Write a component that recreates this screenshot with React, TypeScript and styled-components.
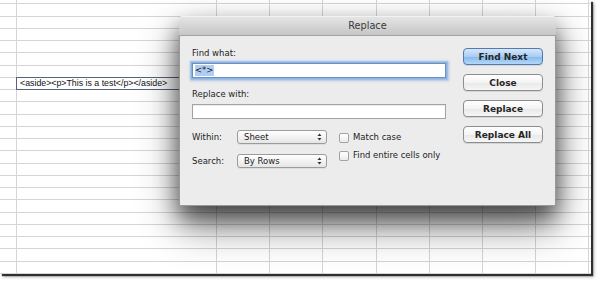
import React from 'react';
import styled, { createGlobalStyle } from 'styled-components';

const GlobalStyle = createGlobalStyle`
  html, body {
    margin: 0;
    padding: 0;
    background: #ffffff;
  }
  body {
    width: 600px;
    height: 282px;
    overflow: hidden;
  }
`;

const UI_FONT = `"DejaVu Sans", "Noto Sans", sans-serif`;
const COLS = 10;
const ROWS = 24;

const Screen = styled.div`
  position: relative;
  width: 591px;
  height: 274px;
  background: #ffffff;
  overflow: hidden;
  box-shadow: 2px 2px 1px rgba(0, 0, 0, 0.75), 3px 3px 3px rgba(0, 0, 0, 0.3);
`;

const Sheet = styled.div`
  display: grid;
  grid-template-columns: 17px 200px repeat(7, 53.2px) 1fr;
  grid-template-rows: 4.3px repeat(22, 12.25px) 1fr;
  width: 100%;
  height: 100%;
`;

const Cell = styled.div<{ $last?: boolean }>`
  position: relative;
  box-sizing: border-box;
  border-bottom: 1px solid #d5d5d5;
  border-right: ${(p) => (p.$last ? 'none' : '1px solid #d5d5d5')};
`;

const CellEditor = styled.div`
  position: absolute;
  left: -1px;
  top: -1px;
  z-index: 1;
  box-sizing: border-box;
  width: 180px;
  height: 13px;
  padding-left: 3px;
  border: 1px solid #56627e;
  background: #ffffff;
  font-family: "Liberation Sans", Arial, sans-serif;
  font-size: 8.8px;
  line-height: 11px;
  color: #111;
  white-space: nowrap;
`;

const Dialog = styled.div`
  position: absolute;
  left: 179px;
  top: 16px;
  z-index: 2;
  width: 377px;
  height: 190px;
  box-sizing: border-box;
  display: flex;
  flex-direction: column;
  background: #ececec;
  border: 1px solid #9a9a9a;
  border-top: none;
  border-radius: 4px 4px 0 0;
  box-shadow: 0 12px 22px rgba(0, 0, 0, 0.55), 0 20px 42px rgba(0, 0, 0, 0.45);
  font-family: ${UI_FONT};
  font-size: 8.5px;
  color: #1c1c1c;
`;

const TitleBar = styled.div`
  height: 20px;
  box-sizing: border-box;
  display: flex;
  align-items: center;
  justify-content: center;
  border-radius: 4px 4px 0 0;
  border-bottom: 1px solid #a3a3a3;
  background: linear-gradient(#e6e6e6, #d6d6d6 50%, #c6c6c6);
  box-shadow: inset 0 1px 0 #f2f2f2;
  font-size: 9.7px;
  color: #3a3a3a;
  margin: 0 -1px;
`;

const Body = styled.div`
  flex: 1;
  display: flex;
  gap: 17px;
  padding: 12px 12px 0 12px;
`;

const FieldColumn = styled.div`
  flex: 1;
  display: flex;
  flex-direction: column;
`;

const Label = styled.div<{ $gap?: number }>`
  line-height: 11px;
  margin-top: ${(p) => p.$gap ?? 0}px;
  margin-bottom: 4px;
`;

const TextInput = styled.div<{ $focused?: boolean }>`
  height: 15px;
  box-sizing: border-box;
  display: flex;
  padding: 1px 2px;
  background: #ffffff;
  border: 1px solid ${(p) => (p.$focused ? '#6d8fc2' : '#a2a2a2')};
  box-shadow: ${(p) =>
    p.$focused
      ? '0 0 0 1.5px #8db5e3, 0 0 2px 2.5px rgba(120, 165, 225, 0.55)'
      : 'inset 0 1px 1px rgba(0, 0, 0, 0.08)'};
`;

const Selection = styled.span`
  background: #b0cdf2;
  line-height: 11px;
  color: #1a1a1a;
`;

const Options = styled.div`
  display: flex;
  margin-top: 11px;
  gap: 12px;
`;

const PopupGrid = styled.div`
  display: grid;
  grid-template-columns: 45px 90px;
  row-gap: 10px;
  align-items: center;
`;

const Popup = styled.div`
  height: 14px;
  box-sizing: border-box;
  display: flex;
  align-items: center;
  justify-content: space-between;
  padding: 0 4px 0 6px;
  border: 1px solid #9b9b9b;
  border-radius: 3px;
  background: linear-gradient(#ffffff, #f3f3f3 50%, #e6e6e6);
  box-shadow: 0 1px 0 rgba(0, 0, 0, 0.06);
  line-height: 11px;
`;

const CheckList = styled.div`
  display: flex;
  flex-direction: column;
  gap: 7px;
  padding-top: 2px;
`;

const CheckRow = styled.label`
  display: flex;
  align-items: center;
  gap: 4px;
  line-height: 11px;
`;

const Box = styled.span`
  width: 10px;
  height: 10px;
  box-sizing: border-box;
  border: 1px solid #a3a3a3;
  border-radius: 2px;
  background: linear-gradient(#ffffff, #ececec);
`;

const ButtonColumn = styled.div`
  width: 80px;
  display: flex;
  flex-direction: column;
  gap: 9px;
`;

const Button = styled.div<{ $primary?: boolean }>`
  height: 17px;
  box-sizing: border-box;
  display: flex;
  align-items: center;
  justify-content: center;
  border-radius: 4px;
  border: 1px solid ${(p) => (p.$primary ? '#5479b0' : '#8d8d8d')};
  background: ${(p) =>
    p.$primary
      ? 'linear-gradient(#d6e7fa, #a9cdf3 50%, #86bbef 55%, #b4d7f7)'
      : 'linear-gradient(#ffffff, #f4f4f4 50%, #e9e9e9 55%, #f6f6f6)'};
  box-shadow: 0 1px 0 rgba(0, 0, 0, 0.1);
  font-weight: bold;
  font-size: 9px;
  color: #262626;
`;

const Arrows = () => (
  <svg width="5" height="8" viewBox="0 0 5 8">
    <path d="M2.5 0.5 L4.5 3 L0.5 3 Z" fill="#333" />
    <path d="M2.5 7.5 L4.5 5 L0.5 5 Z" fill="#333" />
  </svg>
);

export default function App() {
  const cells = [];
  for (let r = 0; r < ROWS; r++) {
    for (let c = 0; c < COLS; c++) {
      cells.push(
        <Cell key={`${r}-${c}`} $last={c === COLS - 1}>
          {r === 7 && c === 1 && <CellEditor>{'<aside><p>This is a test</p></aside>'}</CellEditor>}
        </Cell>
      );
    }
  }

  return (
    <>
      <GlobalStyle />
      <Screen>
        <Sheet>{cells}</Sheet>
        <Dialog>
          <TitleBar>Replace</TitleBar>
          <Body>
            <FieldColumn>
              <Label>Find what:</Label>
              <TextInput $focused>
                <Selection>{'<*>'}</Selection>
              </TextInput>
              <Label $gap={11}>Replace with:</Label>
              <TextInput />
              <Options>
                <PopupGrid>
                  <span>Within:</span>
                  <Popup>
                    Sheet
                    <Arrows />
                  </Popup>
                  <span>Search:</span>
                  <Popup>
                    By Rows
                    <Arrows />
                  </Popup>
                </PopupGrid>
                <CheckList>
                  <CheckRow>
                    <Box />
                    Match case
                  </CheckRow>
                  <CheckRow>
                    <Box />
                    Find entire cells only
                  </CheckRow>
                </CheckList>
              </Options>
            </FieldColumn>
            <ButtonColumn>
              <Button $primary>Find Next</Button>
              <Button>Close</Button>
              <Button>Replace</Button>
              <Button>Replace All</Button>
            </ButtonColumn>
          </Body>
        </Dialog>
      </Screen>
    </>
  );
}
